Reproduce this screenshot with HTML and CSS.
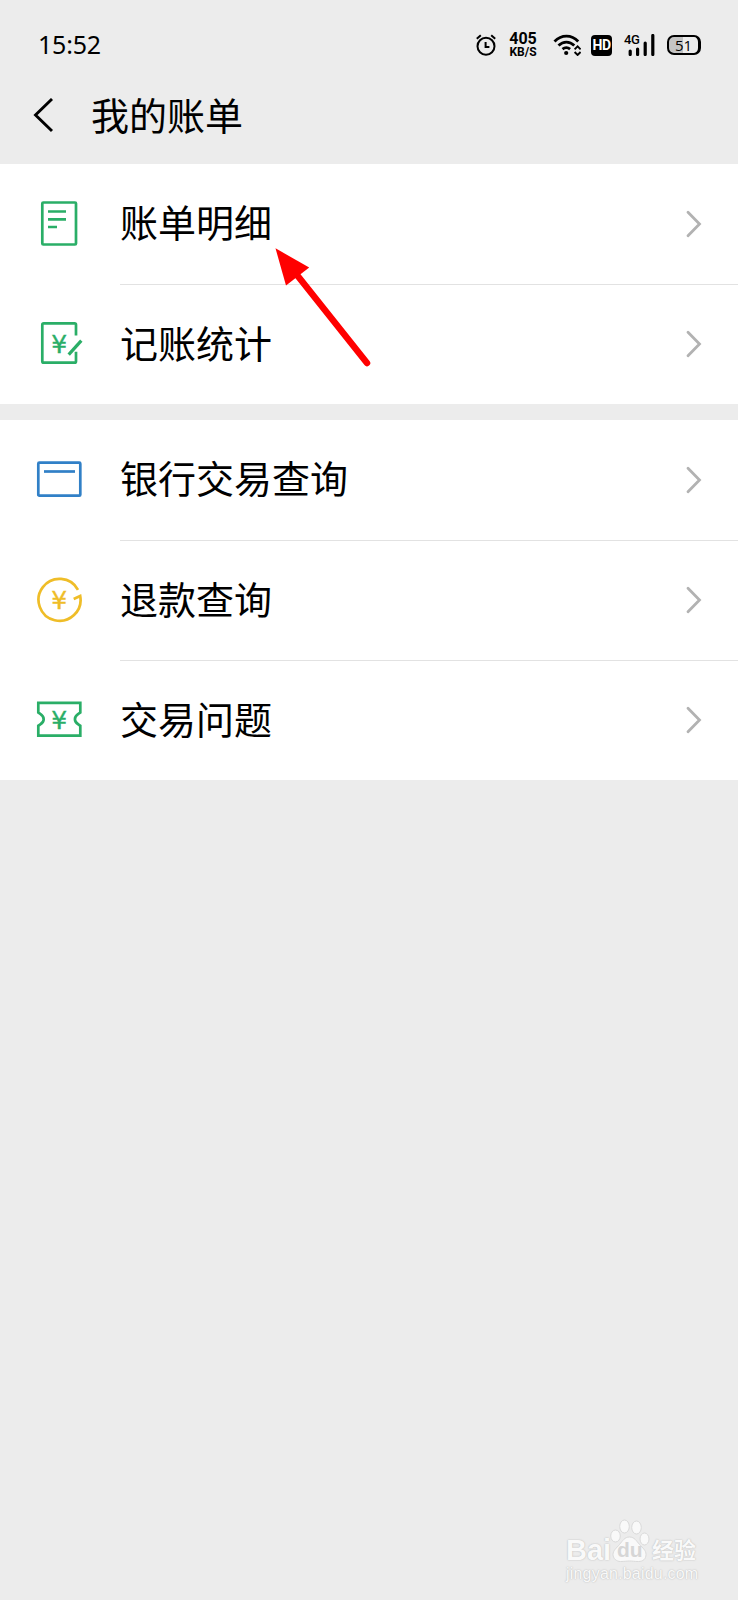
FILE: index.html
```html
<!DOCTYPE html>
<html lang="zh-CN">
<head>
  <meta charset="UTF-8" />
  <meta name="viewport" content="width=device-width, initial-scale=1" />
  <title>我的账单</title>
  <link rel="stylesheet" href="styles.css">
</head>
<body>
  <!-- 状态栏 -->
  <div class="status-bar">
    <span class="time">15:52</span>
    <div class="status-icons">
      <svg class="alarm" width="20" height="22" viewBox="0 0 20 22">
        <circle cx="10" cy="12.3" r="8.5" />
        <path d="M9.6 8v5h3.8M.8 4.8 4.8 1.2M19.2 4.8 15.2 1.2" />
      </svg>
      <div class="speed"><b>405</b><span>KB/S</span></div>
      <svg class="wifi" width="28" height="22" viewBox="0 0 28 22">
        <path d="M1.5 7.5C8.5 .2 18.5 .2 25.2 7.5M5.5 11.5c4.8-4.6 11-4.6 15.8 0M9.5 15.2c2.4-2 5.2-2 7.6 0" />
        <circle cx="13.2" cy="19" r="2.1" />
        <path class="updown" d="M21.6 15.4l3-3 3 3M21.6 18l3 3 3-3" />
      </svg>
      <span class="hd">HD</span>
      <div class="signal">
        <span class="net">4G</span>
        <svg width="31" height="22" viewBox="0 0 31 22">
          <path d="M6.2 17v3.5M13.6 15v5.5M21.2 9v11.5M28.8 1.5v19" />
        </svg>
      </div>
      <div class="battery"><span>51</span></div>
    </div>
  </div>

  <!-- 标题栏 -->
  <header class="title-bar">
    <svg class="back" width="22" height="36" viewBox="0 0 22 36">
      <path d="M19 1 2.5 17 19 33" />
    </svg>
    <h1>我的账单</h1>
  </header>

  <!-- 账单列表 -->
  <main>
    <ul class="group">
      <li class="row">
        <svg class="icon green" viewBox="0 0 48 48">
          <rect x="7.3" y="2.5" width="33.7" height="42" rx="1" />
          <path d="M13 11.5h18M13 19.3h18M13 27h9" />
        </svg>
        <div class="cell">
          <span>账单明细</span>
          <svg class="chevron" viewBox="0 0 16 28"><path d="M2 2.3 13.5 14 2 25.7" /></svg>
        </div>
      </li>
      <li class="row">
        <svg class="icon green" viewBox="0 0 48 48">
          <path d="M41 15.5V4.8q0-1.5-1.5-1.5H8.8q-1.5 0-1.5 1.5v36.4q0 1.5 1.5 1.5h30.7q1.5 0 1.5-1.5v-9.5" />
          <path class="pen" d="M46.3 20.6 33.7 34.6" />
          <text x="24.3" y="32.5">¥</text>
        </svg>
        <div class="cell">
          <span>记账统计</span>
          <svg class="chevron" viewBox="0 0 16 28"><path d="M2 2.3 13.5 14 2 25.7" /></svg>
        </div>
      </li>
    </ul>

    <ul class="group">
      <li class="row">
        <svg class="icon blue" viewBox="0 0 48 48">
          <rect x="3.3" y="6.7" width="42" height="33" rx="1" />
          <path d="M9 15.5h31" />
        </svg>
        <div class="cell">
          <span>银行交易查询</span>
          <svg class="chevron" viewBox="0 0 16 28"><path d="M2 2.3 13.5 14 2 25.7" /></svg>
        </div>
      </li>
      <li class="row">
        <svg class="icon yellow" viewBox="0 0 48 48">
          <path d="M43 13.8A21 21 0 1 0 45.2 20l-6.5 2.9" />
          <text x="24.3" y="33">¥</text>
        </svg>
        <div class="cell">
          <span>退款查询</span>
          <svg class="chevron" viewBox="0 0 16 28"><path d="M2 2.3 13.5 14 2 25.7" /></svg>
        </div>
      </li>
      <li class="row">
        <svg class="icon green" viewBox="0 0 48 48">
          <path d="M3.3 6.8h42v9.7l-2 1.4c-4.5 3-4.5 7.5 0 10.5l2 1.4v9.9h-42v-9.9l2-1.4c4.5-3 4.5-7.5 0-10.5l-2-1.4z" />
          <text x="24.3" y="32.7">¥</text>
        </svg>
        <div class="cell">
          <span>交易问题</span>
          <svg class="chevron" viewBox="0 0 16 28"><path d="M2 2.3 13.5 14 2 25.7" /></svg>
        </div>
      </li>
    </ul>
  </main>

  <!-- 红色指示箭头 -->
  <svg class="pointer" width="100" height="124" viewBox="0 0 100 124">
    <path class="shaft" d="M22 27 92 115" />
    <path d="M.5.3 34.2 19.5 11 37.5z" />
  </svg>

  <!-- 水印 -->
  <footer class="watermark">
    <div class="brand">
      <span class="bai">Bai</span>
      <div class="paw">
        <svg width="40" height="44" viewBox="0 0 40 44">
          <ellipse cx="5.5" cy="17" rx="4.8" ry="6" />
          <ellipse cx="14.5" cy="7.5" rx="4.8" ry="6.5" />
          <ellipse cx="26.5" cy="8.5" rx="4.8" ry="6.5" />
          <ellipse cx="34.5" cy="20" rx="4.5" ry="6" />
          <path d="M19.500 18c5 0 7 4 10 7.500s6.500 5.500 6.500 10-3 7-7.500 7-6-.5-9-.5-5 .5-9 .5-7.500-3-7.500-7 3.500-6.500 6.500-10 5-7.500 10-7.500z" />
        </svg>
        <span class="du">du</span>
      </div>
      <span class="jingyan">经验</span>
    </div>
    <div class="url">jingyan.baidu.com</div>
  </footer>
</body>
</html>
```
FILE: styles.css
```css
/* === 基础 === */
* {
  box-sizing: border-box;
}

body {
  margin: 0;
  min-height: 1600px;
  position: relative;
  display: flex;
  flex-direction: column;
  background: #ececec;
  color: #000;
  font-family: "Noto Sans CJK SC", sans-serif;
}

svg {
  display: block;
  flex-shrink: 0;
  fill: none;
  stroke: #000;
  stroke-width: 2;
}

/* === 状态栏 === */
.status-bar {
  height: 90px;
  padding: 0 37px 0 38px;
  display: flex;
  align-items: center;
  justify-content: space-between;
}

.time {
  padding-bottom: 2px;
  font-family: "Noto Sans", sans-serif;
  font-size: 25px;
  letter-spacing: -0.2px;
}

.status-icons {
  display: flex;
  align-items: center;
}

.alarm {
  margin-right: 13px;
}

.speed {
  width: 28px;
  margin-right: 16px;
  display: flex;
  flex-direction: column;
  align-items: center;
  font-family: Roboto, sans-serif;
}

.speed b {
  font-size: 16px;
  line-height: 15px;
}

.speed span {
  font-size: 12px;
  font-weight: 700;
  line-height: 13px;
}

.wifi {
  margin-right: 10px;
  stroke-width: 2.8;
}

.wifi circle {
  fill: #000;
  stroke: none;
}

.wifi .updown {
  stroke-width: 1.9;
}

.hd {
  width: 21px;
  height: 21px;
  margin-right: 12px;
  border-radius: 4px;
  background: #000;
  color: #fff;
  font: 700 14px/21px Roboto, sans-serif;
  letter-spacing: -0.6px;
  text-align: center;
}

.signal {
  position: relative;
  margin-right: 12px;
}

.signal svg {
  stroke-width: 3.2;
  stroke-linecap: round;
}

.net {
  position: absolute;
  top: 0;
  left: 0;
  font: 500 13px/12px Roboto, sans-serif;
  letter-spacing: -0.5px;
}

.battery {
  width: 34px;
  height: 20px;
  border: 2px solid #000;
  border-right-width: 3px;
  border-radius: 7px;
  background: linear-gradient(90deg, #c4c4c4 50%, #ececec 50%);
  font: 15px/16px "Open Sans", sans-serif;
  text-align: center;
}

/* === 标题栏 === */
.title-bar {
  height: 74px;
  padding: 0 33px 22px;
  display: flex;
  align-items: center;
}

.back {
  margin-right: 36px;
  stroke-width: 2.9;
}

h1 {
  margin: 0;
  padding-bottom: 4px;
  font-size: 38px;
  font-weight: 400;
  line-height: 52px;
}

/* === 列表 === */
.group {
  list-style: none;
  margin: 0 0 16px;
  padding: 0;
  background: #fff;
}

.row {
  height: 120px;
  padding-left: 35px;
  display: flex;
  align-items: center;
}

.icon {
  width: 48px;
  height: 48px;
  margin-right: 37px;
  stroke: currentColor;
  stroke-width: 2.7;
}

.icon text {
  fill: currentColor;
  stroke: currentColor;
  stroke-width: 0.4;
  font: 25px "DejaVu Sans", sans-serif;
  text-anchor: middle;
}

.icon .pen {
  stroke-width: 3.2;
}

.green {
  color: #2aae67;
}

.blue {
  color: #3180c7;
}

.yellow {
  color: #efbd28;
}

.cell {
  flex: 1;
  height: 100%;
  padding: 0 36px 1px 0;
  display: flex;
  align-items: center;
  justify-content: space-between;
  font-size: 38px;
}

.cell span {
  padding-bottom: 6px;
}

.row + .row .cell {
  border-top: 1px solid #e2e2e2;
}

.chevron {
  width: 16px;
  height: 28px;
  stroke: #b2b2b2;
  stroke-width: 2.8;
  stroke-linecap: round;
}

/* === 箭头 === */
.pointer {
  position: absolute;
  top: 248px;
  left: 275px;
  fill: #f00;
  stroke: none;
}

.pointer .shaft {
  stroke: #f00;
  stroke-width: 6.5;
  stroke-linecap: round;
}

/* === 水印 === */
.watermark {
  width: 132px;
  margin: auto 40px 15px auto;
  color: #f9f9f9;
  text-shadow: 0 0 1px #bbb, 0 0 2px #ccc;
}

.brand {
  display: flex;
  align-items: flex-end;
}

.bai {
  width: 44px;
  font: 700 29px/26px "Liberation Sans", sans-serif;
}

.paw {
  position: relative;
  width: 42px;
}

.paw svg {
  fill: #f9f9f9;
  stroke: #dadada;
  stroke-width: 1;
}

.du {
  position: absolute;
  top: 20px;
  left: 7px;
  color: #d6d6d6;
  font: 700 21px/22px "Liberation Sans", sans-serif;
  text-shadow: none;
}

.jingyan {
  font-size: 22px;
  font-weight: 700;
  line-height: 29px;
}

.url {
  font: 16px/22px "Liberation Sans", sans-serif;
  letter-spacing: 0.2px;
  white-space: nowrap;
}
```
